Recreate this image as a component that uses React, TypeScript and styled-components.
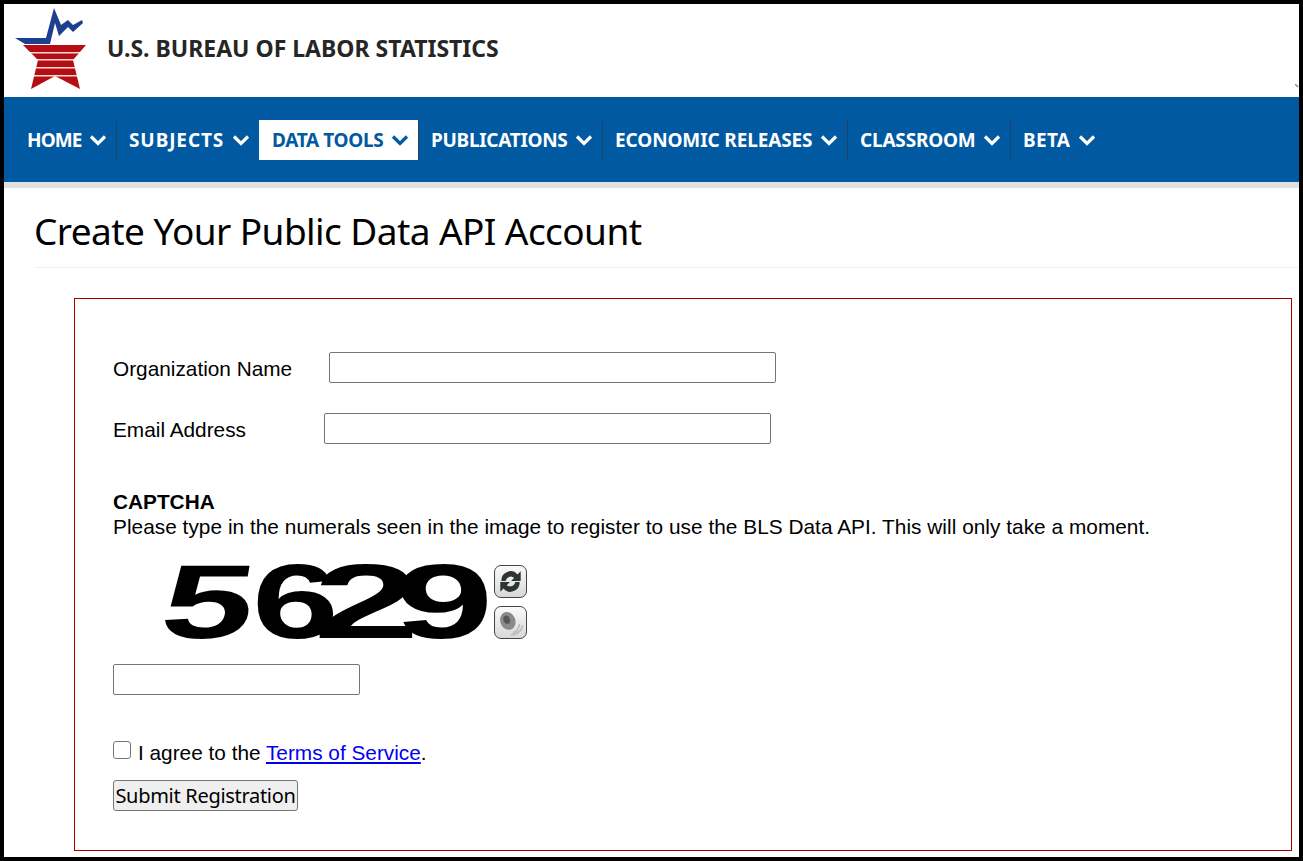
import React from "react";
import styled, { createGlobalStyle } from "styled-components";

const Global = createGlobalStyle`
  html, body { margin: 0; padding: 0; background: #000; }
  body { font-family: "Liberation Sans", Arial, sans-serif; }
`;
const Frame = styled.div`
  box-sizing: border-box; width: 1303px; height: 861px; border: 4px solid #000; background: #fff; overflow: hidden;
`;
const Masthead = styled.header`
  height: 93px; display: flex; align-items: center; padding-left: 7px; box-sizing: border-box; position: relative;
`;
const Logo = styled.svg`
  width: 76px; height: 86px; flex: none; align-self: flex-start; margin-right: 20px; filter: blur(0.3px);
`;
const Agency = styled.div`
  font: 700 23px "Noto Sans", sans-serif; color: #262626; margin-top: -5px;
`;
const ScrollMark = styled.svg`
  position: absolute; right: 0; bottom: 9px; width: 4px; height: 4px;
`;
const Nav = styled.nav`
  height: 62px; background: #0059a1; border-bottom: 6px solid #e0e0e0; display: flex; align-items: flex-start; padding: 23px 0 0 10px;
`;
const NavItem = styled.a<{ $active?: boolean; $first?: boolean; $w: number }>`
  box-sizing: border-box; width: ${(p) => p.$w}px; height: 40px; display: flex; align-items: center; gap: 7px; padding: 0 9px 0 12px; flex: none;
  font: 700 19px "Noto Sans", sans-serif;
  color: ${(p) => (p.$active ? "#0059a1" : "#fff")};
  background: ${(p) => (p.$active ? "#fff" : "transparent")};
  border-left: 1px solid ${(p) => (p.$first || p.$active ? "transparent" : "#1d4263")};
  svg { width: 18px; height: 12px; flex: none; margin-top: -1px; }
`;
const NavLabel = styled.span<{ $ls: number }>`
  flex: 1; white-space: nowrap; letter-spacing: ${(p) => p.$ls}px;
`;
const Main = styled.main`
  padding: 0 0 0 31px;
`;
const Title = styled.h1`
  margin: 0; height: 80px; box-sizing: border-box; padding-top: 19px; border-bottom: 1px solid #eee;
  font: 400 37px/48px "Noto Sans", sans-serif; color: #000; letter-spacing: -0.57px; text-indent: -1px;
`;
const FormBox = styled.form`
  box-sizing: border-box; margin: 30px 7px 0 39px; height: 553px; border: 1px solid #a00000; padding: 53px 0 0 38px;
  font-size: 20.8px; color: #000;
`;
const FieldRow = styled.div<{ $gap: number }>`
  display: flex; align-items: center; height: 31px; margin-bottom: 30px;
  label { width: ${(p) => p.$gap}px; flex: none; position: relative; top: 1px; }
`;
const TextInput = styled.input<{ $w: number }>`
  box-sizing: border-box; width: ${(p) => p.$w}px; height: 31px; border: 1px solid #767676; border-radius: 2px; background: #fff; padding: 0; display: block;
`;
const CaptchaTitle = styled.div`
  font-weight: 700; line-height: 24px; margin-top: 46px;
`;
const CaptchaText = styled.div`
  line-height: 26px; letter-spacing: 0.036px;
`;
const CaptchaRow = styled.div`
  display: flex; margin: 24px 0 0 48px; height: 80px;
`;
const CaptchaImage = styled.svg`
  width: 333px; height: 80px; flex: none; filter: blur(0.5px);
`;
const CaptchaDigit = styled.text`
  font: 700 60px "Liberation Sans", sans-serif; fill: #000;
`;
const CaptchaButtons = styled.div`
  display: flex; flex-direction: column; gap: 8px; margin-top: 1px;
`;
const IconButton = styled.div`
  box-sizing: border-box; width: 33px; height: 33px; border: 1px solid #444; border-radius: 7px;
  background: linear-gradient(#fafafa, #d8d8d8); display: flex; align-items: center; justify-content: center;
  svg { width: 29px; height: 29px; filter: blur(0.4px); }
`;
const CaptchaInputWrap = styled.div`
  margin-top: 20px;
`;
const AgreeRow = styled.div`
  display: flex; align-items: center; margin-top: 45px; height: 26px;
  a { color: #0000ee; text-decoration: underline; }
`;
const Check = styled.input`
  appearance: none; box-sizing: border-box; width: 18px; height: 18px; margin: 0 7px 6px 0; border: 1px solid #767676; border-radius: 3px; background: #fff;
`;
const Submit = styled.button`
  display: block; box-sizing: border-box; margin-top: 14px; width: 185px; height: 31px; padding: 0; border: 1px solid #767676; border-radius: 3px;
  background: #efefef; color: #000; font: 400 20px "Noto Sans", sans-serif; letter-spacing: -0.3px; white-space: nowrap;
`;

const Chevron = () => (
  <svg viewBox="0 0 18 12" fill="none" stroke="currentColor" strokeWidth="3.2">
    <path d="M2 2.5 L9 9.5 L16 2.5" />
  </svg>
);

const items = [
  { t: "HOME", w: 102, ls: -0.9 },
  { t: "SUBJECTS", w: 143, ls: 0.9 },
  { t: "DATA TOOLS", w: 159, ls: -0.35 },
  { t: "PUBLICATIONS", w: 184, ls: -0.3 },
  { t: "ECONOMIC RELEASES", w: 245, ls: -0.12 },
  { t: "CLASSROOM", w: 163, ls: -0.2 },
  { t: "BETA", w: 95, ls: 0.3 },
];

export default function App() {
  return (
    <Frame>
      <Global />
      <Masthead>
        <Logo viewBox="11 4 76 86">
          <path fill="#b50d12" d="M23 45 H86 L73 60 L80 89 L55 76 L31 89 L38 60 Z" />
          <g fill="#fff" opacity="0.85">
            <rect x="20" y="52" width="70" height="1.5" />
            <rect x="20" y="59" width="70" height="1.5" />
            <rect x="20" y="67" width="70" height="1.5" />
            <rect x="20" y="75" width="70" height="1.5" />
          </g>
          <path fill="#1d3f8f" d="M15 38 H46 L54 8 L61 25 L68 20 L73 25 L82 20 L83 23 L73 32 L68 27 L59 36 L55 23 L50 44 H25 Z" />
        </Logo>
        <Agency>U.S. BUREAU OF LABOR STATISTICS</Agency>
        <ScrollMark viewBox="0 0 4 4">
          <path d="M0 0 L3 3" stroke="#888" strokeWidth="1.4" />
        </ScrollMark>
      </Masthead>
      <Nav>
        {items.map((it, i) => (
          <NavItem key={it.t} $w={it.w} $first={i === 0} $active={it.t === "DATA TOOLS"}>
            <NavLabel $ls={it.ls}>{it.t}</NavLabel>
            <Chevron />
          </NavItem>
        ))}
      </Nav>
      <Main>
        <Title>Create Your Public Data API Account</Title>
        <FormBox>
          <FieldRow $gap={216}>
            <label>Organization Name</label>
            <TextInput $w={447} />
          </FieldRow>
          <FieldRow $gap={211}>
            <label>Email Address</label>
            <TextInput $w={447} />
          </FieldRow>
          <CaptchaTitle>CAPTCHA</CaptchaTitle>
          <CaptchaText>Please type in the numerals seen in the image to register to use the BLS Data API. This will only take a moment.</CaptchaText>
          <CaptchaRow>
            <CaptchaImage viewBox="0 0 333 80">
              <CaptchaDigit transform="translate(-4 74) scale(2.75 1.75) skewX(-6)">5</CaptchaDigit>
              <CaptchaDigit transform="translate(91 74) scale(2.6 1.75)">6</CaptchaDigit>
              <CaptchaDigit transform="translate(152 74) scale(3.2 1.75)">2</CaptchaDigit>
              <CaptchaDigit transform="translate(234 74) scale(2.95 1.75)">9</CaptchaDigit>
            </CaptchaImage>
            <CaptchaButtons>
              <IconButton>
                <svg viewBox="0 0 27 27" fill="#2c3434">
                  <path d="M5 13 A8.5 8.5 0 0 1 20 7 L23 4 V13 H14 L17 10 A5 5 0 0 0 9 13 Z" />
                  <path d="M22 14 A8.5 8.5 0 0 1 7 20 L4 23 V14 H13 L10 17 A5 5 0 0 0 18 14 Z" />
                </svg>
              </IconButton>
              <IconButton>
                <svg viewBox="0 0 27 27">
                  <ellipse cx="11" cy="12" rx="7" ry="8.5" fill="#8a8a8a" transform="rotate(-20 11 12)" />
                  <ellipse cx="10" cy="11" rx="3" ry="4" fill="#555" transform="rotate(-20 10 11)" />
                  <path d="M16 23 Q21 21 22 15 M14 25 Q23 24 25 16" fill="none" stroke="#bbb" strokeWidth="1.5" />
                </svg>
              </IconButton>
            </CaptchaButtons>
          </CaptchaRow>
          <CaptchaInputWrap>
            <TextInput $w={247} />
          </CaptchaInputWrap>
          <AgreeRow>
            <Check type="checkbox" />
            <span>I agree to the <a href="#t">Terms of Service</a>.</span>
          </AgreeRow>
          <Submit type="button">Submit Registration</Submit>
        </FormBox>
      </Main>
    </Frame>
  );
}
